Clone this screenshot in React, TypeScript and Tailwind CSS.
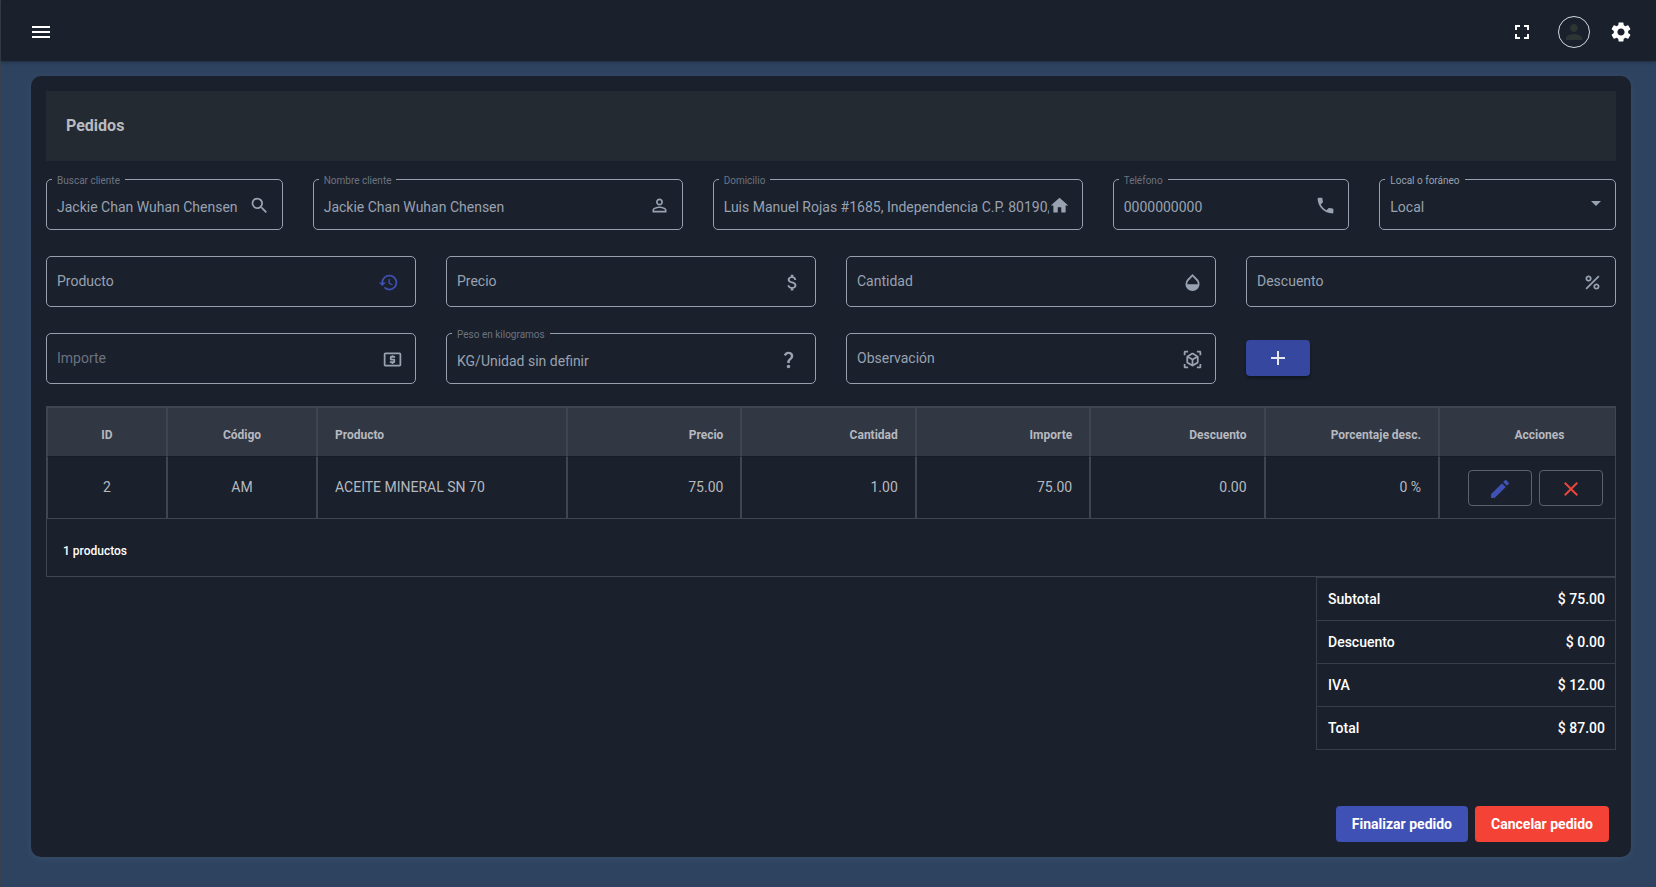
import { useId, type ReactNode } from "react";
import {
  MdAdd,
  MdArrowDropDown,
  MdAttachMoney,
  MdClose,
  MdFullscreen,
  MdHome,
  MdLocalAtm,
  MdMenu,
  MdOpacity,
  MdPercent,
  MdPerson,
  MdPersonOutline,
  MdPhone,
  MdQuestionMark,
  MdRestore,
  MdSearch,
  MdSettings,
  MdViewInAr,
} from "react-icons/md";

type FieldProps = {
  label: string;
  value?: string;
  icon: ReactNode;
  className?: string;
  disabled?: boolean;
};

const floatingLabel =
  "absolute -top-[7px] left-[5px] bg-[#1a202c] px-[5px] text-[10px] leading-4";

function Field({ label, value, icon, className, disabled }: FieldProps) {
  const id = useId();
  const labelColor = disabled || value ? "text-[#6c7380]" : "text-[#99a2b0]";

  return (
    <div
      className={`relative flex h-[51px] items-center rounded-[5px] border border-[#97a0af] pl-[10px] pr-3 ${className ?? ""}`}
    >
      <label
        htmlFor={id}
        className={
          value
            ? `${floatingLabel} ${labelColor}`
            : `pointer-events-none absolute inset-y-0 left-[10px] flex items-center pb-[2px] text-sm ${labelColor}`
        }
      >
        {label}
      </label>
      <input
        id={id}
        defaultValue={value}
        disabled={disabled}
        className="h-full min-w-0 flex-1 bg-transparent pt-[5px] text-sm text-[#99a2b0] outline-none"
      />
      <span className="flex shrink-0 pt-[2px] text-[21px] text-[#99a2b0]">
        {icon}
      </span>
    </div>
  );
}

function EditIcon() {
  return (
    <svg viewBox="0 0 24 24" className="size-6" fill="currentColor">
      <path d="M3 17.46v3.04c0 .28.22.5.5.5h3.04c.13 0 .26-.05.35-.15L17.81 9.94l-3.75-3.75L3.15 17.1c-.1.1-.15.22-.15.36zM20.71 7.04a.996.996 0 0 0 0-1.41l-2.34-2.34a.996.996 0 0 0-1.41 0l-1.83 1.83 3.75 3.75 1.83-1.83z" />
    </svg>
  );
}

type Column = {
  key: string;
  title: string;
  width: string;
  align: string;
};

const columns: Column[] = [
  { key: "id", title: "ID", width: "w-[120px]", align: "text-center" },
  { key: "code", title: "Código", width: "w-[150px]", align: "text-center" },
  { key: "product", title: "Producto", width: "w-[250px]", align: "text-left" },
  { key: "price", title: "Precio", width: "", align: "text-right" },
  { key: "quantity", title: "Cantidad", width: "", align: "text-right" },
  { key: "amount", title: "Importe", width: "", align: "text-right" },
  { key: "discount", title: "Descuento", width: "", align: "text-right" },
  { key: "percent", title: "Porcentaje desc.", width: "", align: "text-right" },
];

const rows: Record<string, string>[] = [
  {
    id: "2",
    code: "AM",
    product: "ACEITE MINERAL SN 70",
    price: "75.00",
    quantity: "1.00",
    amount: "75.00",
    discount: "0.00",
    percent: "0 %",
  },
];

const totals = [
  { label: "Subtotal", value: "$ 75.00" },
  { label: "Descuento", value: "$ 0.00" },
  { label: "IVA", value: "$ 12.00" },
  { label: "Total", value: "$ 87.00" },
];

function Header() {
  return (
    <header className="relative flex h-[61px] items-center justify-between bg-[#1b202d] pl-7 pr-[23px] pt-[2px] text-2xl text-white shadow-[0_1px_3px_rgba(0,0,0,0.35)]">
      <button type="button" aria-label="Menú">
        <MdMenu />
      </button>
      <div className="flex items-center">
        <button type="button" aria-label="Pantalla completa" className="mr-6">
          <MdFullscreen />
        </button>
        <button
          type="button"
          aria-label="Usuario"
          className="mr-[19px] grid size-8 place-items-center rounded-full border border-[#d5d8de] text-[#2e3334]"
        >
          <MdPerson />
        </button>
        <button type="button" aria-label="Ajustes">
          <MdSettings />
        </button>
      </div>
    </header>
  );
}

function OrderForm() {
  const selectId = useId();

  return (
    <form className="mt-[18px] grid gap-x-[30px] gap-y-[26px] md:grid-cols-12">
      <Field
        label="Buscar cliente"
        value="Jackie Chan Wuhan Chensen"
        icon={<MdSearch />}
        className="md:col-span-2"
      />
      <Field
        label="Nombre cliente"
        value="Jackie Chan Wuhan Chensen"
        icon={<MdPersonOutline />}
        className="md:col-span-3"
      />
      <Field
        label="Domicilio"
        value="Luis Manuel Rojas #1685, Independencia C.P. 80190,"
        icon={<MdHome />}
        className="md:col-span-3"
      />
      <Field
        label="Teléfono"
        value="0000000000"
        icon={<MdPhone />}
        className="md:col-span-2"
      />
      <div className="relative flex h-[51px] items-center rounded-[5px] border border-[#97a0af] md:col-span-2">
        <label htmlFor={selectId} className={`${floatingLabel} text-[#99a2b0]`}>
          Local o foráneo
        </label>
        <select
          id={selectId}
          defaultValue="Local"
          className="h-full w-full appearance-none bg-transparent pl-[10px] pr-8 pt-[5px] text-sm text-[#99a2b0] outline-none"
        >
          <option>Local</option>
        </select>
        <MdArrowDropDown className="pointer-events-none absolute right-[7px] top-[11px] text-2xl text-[#99a2b0]" />
      </div>

      <Field
        label="Producto"
        icon={
          <button
            type="button"
            aria-label="Historial"
            className="mr-1 text-[#3f51b5]"
          >
            <MdRestore />
          </button>
        }
        className="md:col-span-3"
      />
      <Field
        label="Precio"
        icon={<MdAttachMoney />}
        className="md:col-span-3"
      />
      <Field label="Cantidad" icon={<MdOpacity />} className="md:col-span-3" />
      <Field label="Descuento" icon={<MdPercent />} className="md:col-span-3" />

      <Field
        label="Importe"
        icon={<MdLocalAtm />}
        disabled
        className="md:col-span-3"
      />
      <Field
        label="Peso en kilogramos"
        value="KG/Unidad sin definir"
        icon={<MdQuestionMark className="mr-1" />}
        disabled
        className="md:col-span-3"
      />
      <Field
        label="Observación"
        icon={<MdViewInAr />}
        className="md:col-span-3"
      />
      <div className="flex items-center pb-[2px] md:col-span-3">
        <button
          type="button"
          aria-label="Agregar"
          className="grid h-9 w-16 place-items-center rounded bg-[#3647a0] text-2xl text-[#e4e6f0] shadow-[0_2px_3px_rgba(0,0,0,0.35)]"
        >
          <MdAdd />
        </button>
      </div>
    </form>
  );
}

function ProductsTable() {
  return (
    <div className="mt-[22px] overflow-x-auto border border-[#3f4551]">
      <table className="w-full min-w-[1200px] table-fixed border-separate border-spacing-0">
        <thead>
          <tr className="h-[50px] bg-[#313743] text-xs text-[#b6b9bf]">
            {columns.map((column) => (
              <th
                key={column.key}
                className={`border-x border-t border-b border-x-[#3f4551] border-t-[#3f4551] border-b-[#161b26] px-[17px] pt-[5px] font-bold ${column.width} ${column.align}`}
              >
                {column.title}
              </th>
            ))}
            <th className="w-[176px] border-t border-b border-l border-l-[#3f4551] border-t-[#3f4551] border-b-[#161b26] pl-6 pt-[5px] text-center font-bold">
              Acciones
            </th>
          </tr>
        </thead>
        <tbody>
          {rows.map((row) => (
            <tr key={row.id} className="h-[62px] text-sm text-[#b6b9bf]">
              {columns.map((column) => (
                <td
                  key={column.key}
                  className={`border-x border-b border-[#3f4551] px-[17px] pb-[2px] ${column.align}`}
                >
                  {row[column.key]}
                </td>
              ))}
              <td className="border-b border-l border-[#3f4551] pr-3">
                <div className="flex justify-end gap-[7px]">
                  <button
                    type="button"
                    aria-label="Editar"
                    className="grid h-9 w-16 place-items-center rounded border border-[#5d636e] pt-[2px] text-[#3f51b5]"
                  >
                    <EditIcon />
                  </button>
                  <button
                    type="button"
                    aria-label="Eliminar"
                    className="grid h-9 w-16 place-items-center rounded border border-[#5d636e] pt-[2px] text-2xl text-[#e8463a]"
                  >
                    <MdClose />
                  </button>
                </div>
              </td>
            </tr>
          ))}
        </tbody>
      </table>
      <div className="flex h-[57px] items-center pl-4 pt-[7px] text-xs font-medium text-white">
        {rows.length} productos
      </div>
    </div>
  );
}

export default function App() {
  return (
    <div className="flex min-h-screen flex-col border-l border-[#3a4250] bg-[#2d435f] font-['Roboto',sans-serif]">
      <Header />
      <main className="pb-[30px] pl-[30px] pr-[25px] pt-[15px]">
        <section className="rounded-[10px] bg-[#1a202c] p-[15px] shadow-[0_2px_10px_rgba(255,255,255,0.06)]">
          <div className="flex h-[70px] items-center bg-[#242a32] px-5">
            <h1 className="text-base font-bold text-[#b9bbbf]">Pedidos</h1>
          </div>

          <OrderForm />
          <ProductsTable />

          <table className="ml-auto w-[300px] border-collapse text-sm font-medium text-white">
            <tbody>
              {totals.map((total) => (
                <tr key={total.label} className="h-[43px] border border-[#373d49]">
                  <th scope="row" className="pl-[11px] text-left font-medium">
                    {total.label}
                  </th>
                  <td className="pr-[10px] text-right">{total.value}</td>
                </tr>
              ))}
            </tbody>
          </table>

          <div className="mt-14 flex justify-end gap-[7px] pr-[7px] text-sm font-bold text-white">
            <button type="button" className="h-9 rounded bg-[#3f51b5] px-4">
              Finalizar pedido
            </button>
            <button type="button" className="h-9 rounded bg-[#f44336] px-4">
              Cancelar pedido
            </button>
          </div>
        </section>
      </main>
    </div>
  );
}
